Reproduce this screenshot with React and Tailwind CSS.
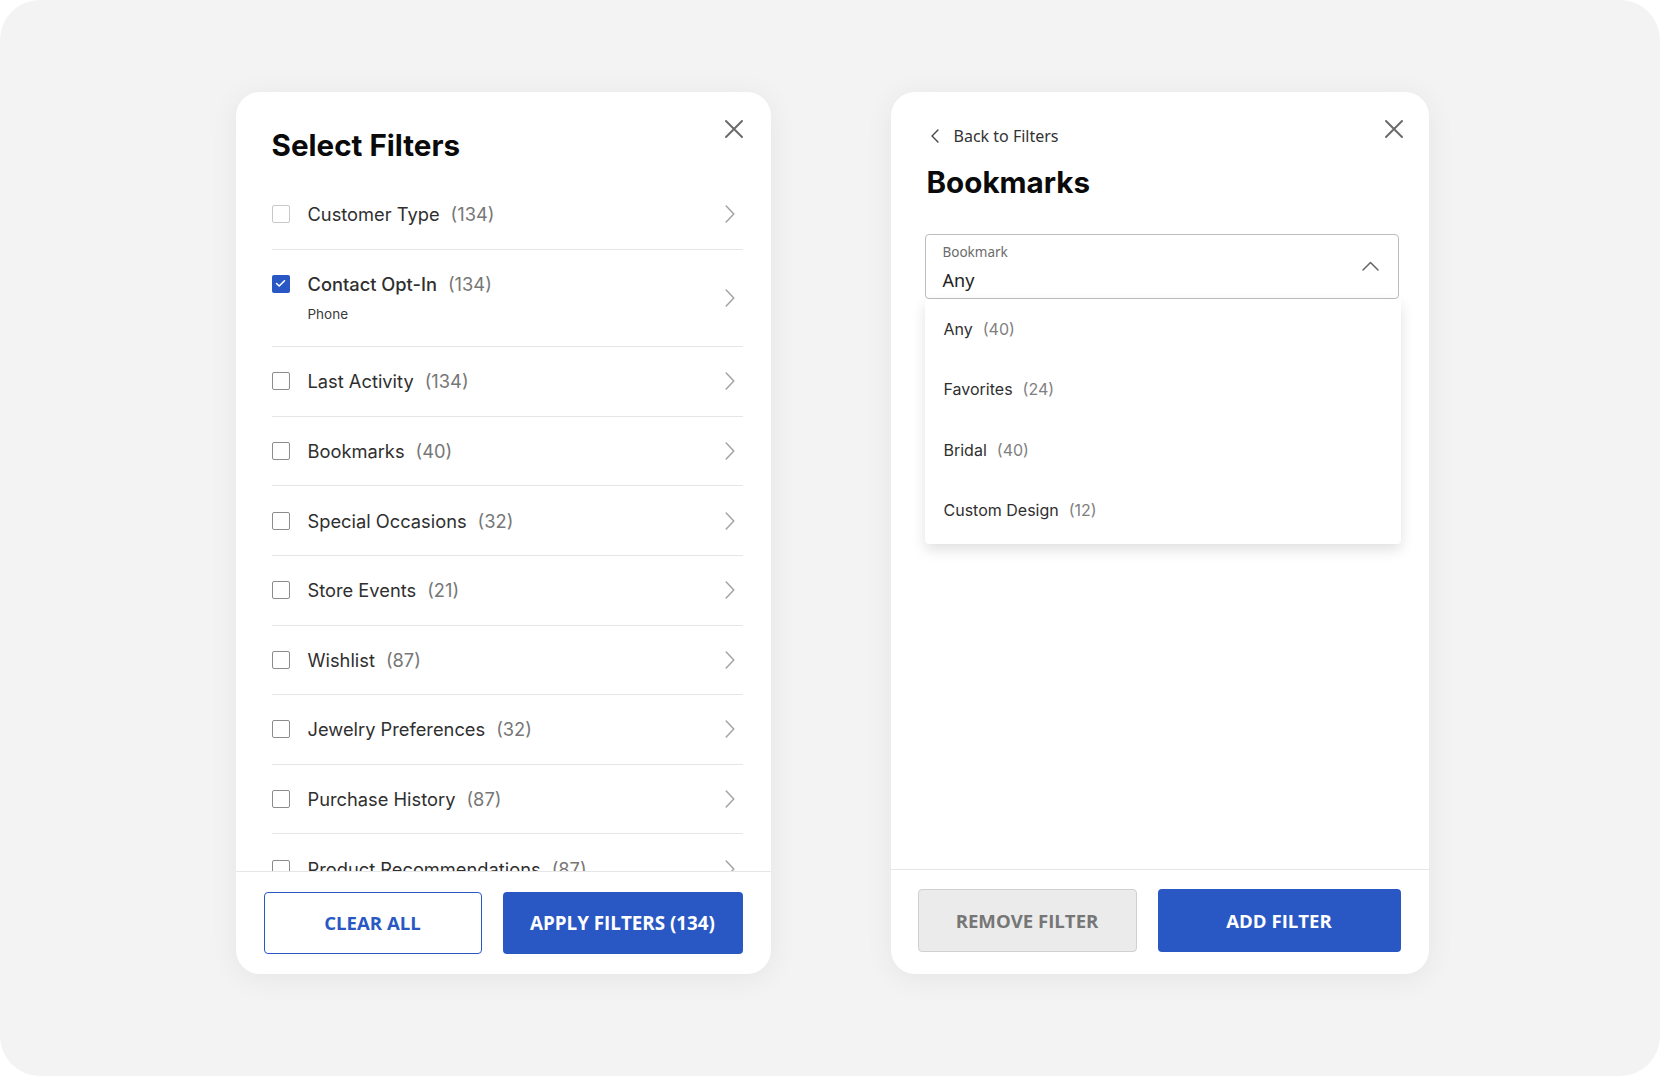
import React from 'react';

const filters = [
  { label: 'Customer Type', count: 134, faint: true },
  { label: 'Contact Opt-In', count: 134, checked: true, sub: 'Phone' },
  { label: 'Last Activity', count: 134 },
  { label: 'Bookmarks', count: 40 },
  { label: 'Special Occasions', count: 32 },
  { label: 'Store Events', count: 21 },
  { label: 'Wishlist', count: 87 },
  { label: 'Jewelry Preferences', count: 32 },
  { label: 'Purchase History', count: 87 },
  { label: 'Product Recommendations', count: 87 },
];

const options = [
  { label: 'Any', count: 40 },
  { label: 'Favorites', count: 24 },
  { label: 'Bridal', count: 40 },
  { label: 'Custom Design', count: 12 },
];

function CloseIcon() {
  return (
    <svg width="20" height="20" viewBox="0 0 20 20" fill="none">
      <path d="M2 2L18 18M18 2L2 18" stroke="#6b6b6b" strokeWidth="2" strokeLinecap="round" />
    </svg>
  );
}

function Chevron({ dir = 'right' }) {
  if (dir === 'right') {
    return (
      <svg width="10" height="18" viewBox="0 0 10 18" fill="none">
        <path d="M1.2 1L8.8 9L1.2 17" stroke="#a3a3a3" strokeWidth="1.5" strokeLinecap="round" strokeLinejoin="round" />
      </svg>
    );
  }
  if (dir === 'left') {
    return (
      <svg width="8" height="14" viewBox="0 0 8 14" fill="none">
        <path d="M7 1L1 7L7 13" stroke="#444" strokeWidth="1.4" strokeLinecap="round" strokeLinejoin="round" />
      </svg>
    );
  }
  return (
    <svg width="17" height="10" viewBox="0 0 17 10" fill="none">
      <path d="M1 9L8.5 1.5L16 9" stroke="#666" strokeWidth="1.5" strokeLinecap="round" strokeLinejoin="round" />
    </svg>
  );
}

function Checkbox({ checked, faint }) {
  if (checked) {
    return (
      <div className="mt-[3px] flex h-[18px] w-[18px] shrink-0 items-center justify-center rounded-[2px] bg-[#2958c4]">
        <svg width="11" height="9" viewBox="0 0 11 9" fill="none">
          <path d="M1.5 4.5L4.2 7L9.5 1.8" stroke="#fff" strokeWidth="1.6" strokeLinecap="round" strokeLinejoin="round" />
        </svg>
      </div>
    );
  }
  return (
    <div
      className={
        faint
          ? 'mt-[3px] h-[18px] w-[18px] shrink-0 rounded-[2px] border-[1.5px] border-[#c8c8c8] bg-white'
          : 'mt-[3px] h-[18px] w-[18px] shrink-0 rounded-[2px] border-[1.5px] border-[#8c8c8c] bg-white'
      }
    />
  );
}

function FilterRow({ item }) {
  return (
    <div className="flex items-center justify-between border-b border-[#e6e6e6] py-[22.3px]">
      <div className="flex items-start gap-[18px]">
        <Checkbox checked={item.checked} faint={item.faint} />
        <div className="flex flex-col">
          <div className="flex items-center leading-6">
            <span className={item.checked ? 'text-[18.3px] font-medium text-[#2f2f2f]' : 'text-[18.3px] text-[#2f2f2f]'}>
              {item.label}
            </span>
            <span className="ml-[11px] text-[18.3px] text-[#777]">({item.count})</span>
          </div>
          {item.sub && <div className="mt-[8px] text-[13.5px] leading-5 text-[#3a3a3a]">{item.sub}</div>}
        </div>
      </div>
      <div className="mr-[8px]">
        <Chevron />
      </div>
    </div>
  );
}

function SelectFilters() {
  return (
    <div className="flex h-[882px] w-[535px] flex-col overflow-hidden rounded-[24px] bg-white shadow-[0_4px_30px_rgba(0,0,0,0.06)]">
      <div className="flex items-start justify-between pt-[35px] pr-[27px] pl-[36px]">
        <h1 className="text-[29.6px] leading-9 font-bold text-[#0a0a0a]">Select Filters</h1>
        <button className="-mt-[8px]">
          <CloseIcon />
        </button>
      </div>
      <div className="mt-[17px] min-h-0 flex-1 overflow-hidden pr-[28px] pl-[36px]">
        {filters.map((f) => (
          <FilterRow key={f.label} item={f} />
        ))}
      </div>
      <div className="flex shrink-0 gap-[21px] border-t border-[#e6e6e6] px-[28px] pt-[20px] pb-[20px]">
        <button className="h-[62px] w-[218px] rounded-[4px] border border-[#2958c4] bg-white font-['Open_Sans',sans-serif] text-[18.6px] font-bold text-[#2958c4]">
          CLEAR ALL
        </button>
        <button className="h-[62px] flex-1 rounded-[4px] bg-[#2958c4] font-['Open_Sans',sans-serif] text-[18.8px] font-bold text-white">
          APPLY FILTERS (134)
        </button>
      </div>
    </div>
  );
}

function BookmarkPanel() {
  return (
    <div className="flex h-[882px] w-[538px] flex-col overflow-hidden rounded-[24px] bg-white shadow-[0_4px_30px_rgba(0,0,0,0.06)]">
      <div className="flex-1 pt-[32px] pr-[30px] pl-[34px]">
        <div className="flex items-start justify-between">
          <button className="flex items-center gap-[15px] pl-[6px] font-['Noto_Sans',sans-serif] text-[16px] leading-6 text-[#333]">
            <Chevron dir="left" />
            <span>Back to Filters</span>
          </button>
          <button className="mt-[-5px] -mr-[5px]">
            <CloseIcon />
          </button>
        </div>
        <h1 className="mt-[16px] pl-[2px] text-[29.6px] leading-9 font-bold text-[#0a0a0a]">Bookmarks</h1>
        <div className="relative mt-[34px]">
          <div className="flex items-center justify-between rounded-[4px] border border-[#bcbcbc] pt-[8px] pr-[19px] pb-[6px] pl-[17px] font-['Noto_Sans',sans-serif]">
            <div className="flex flex-col">
              <span className="text-[13.5px] leading-[18px] text-[#6b6b6b]">Bookmark</span>
              <span className="mt-[7px] text-[18px] leading-6 text-[#222]">Any</span>
            </div>
            <div className="mb-[4px]">
              <Chevron dir="up" />
            </div>
          </div>
          <div className="absolute top-full right-[-2px] left-0 rounded-b-[4px] bg-white pb-[4px] shadow-[0_6px_14px_rgba(0,0,0,0.12)]">
            {options.map((o) => (
              <div key={o.label} className="flex h-[60.3px] items-center pl-[19px] text-[16px]">
                <span className="text-[#2f2f2f]">{o.label}</span>
                <span className="ml-[10px] text-[#808080]">({o.count})</span>
              </div>
            ))}
          </div>
        </div>
      </div>
      <div className="flex gap-[21px] border-t border-[#e6e6e6] pt-[19px] pr-[28px] pb-[22px] pl-[27px]">
        <button className="h-[63px] w-[219px] rounded-[4px] border border-[#d0d0d0] bg-[#ebebeb] font-['Open_Sans',sans-serif] text-[18.6px] font-bold text-[#767676]">
          REMOVE FILTER
        </button>
        <button className="h-[63px] flex-1 rounded-[4px] bg-[#2958c4] font-['Open_Sans',sans-serif] text-[18.6px] font-bold text-white">
          ADD FILTER
        </button>
      </div>
    </div>
  );
}

export default function App() {
  return (
    <div className="bg-white font-['Inter',sans-serif]">
      <div className="flex h-[1076px] w-full items-start justify-center gap-[120px] rounded-[40px] bg-[#f3f3f3] pt-[92px] pl-[4px]">
        <SelectFilters />
        <BookmarkPanel />
      </div>
    </div>
  );
}
